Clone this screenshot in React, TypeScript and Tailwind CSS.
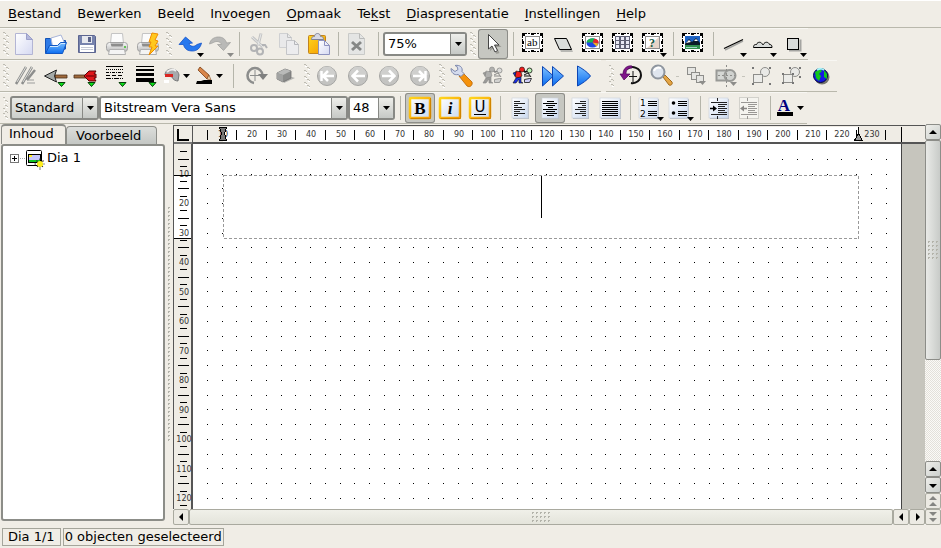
import React, { useLayoutEffect, useRef, useState } from "react";

type IconProps = { children: React.ReactNode; w?: number };

const Art = ({ children, w = 30 }: IconProps) => (
  <svg width={w} height={30} viewBox={`0 0 ${w} 30`} className="block" aria-hidden="true">
    {children}
  </svg>
);

type ToolProps = {
  label: string;
  children: React.ReactNode;
  size?: string;
  w?: number;
  pressed?: boolean;
  disabled?: boolean;
};

const Tool = ({ label, children, size = "w-[30px]", w, pressed, disabled }: ToolProps) => (
  <button
    type="button"
    title={label}
    aria-label={label}
    disabled={disabled}
    className={`${size} h-[30px] shrink-0 rounded-[3px] ${
      pressed ? "bg-[#c6c7c1] shadow-[inset_0_0_0_1px_#8d8d88]" : ""
    }`}
  >
    <Art w={w}>{children}</Art>
  </button>
);

const Sep = ({ size = "w-[10px]" }: { size?: string }) => (
  <div className={`${size} flex h-[30px] shrink-0 items-center justify-center`}>
    <div className="h-6 w-px bg-[#b5b5aa]" />
  </div>
);

const Handle = ({ size = "w-[11px]" }: { size?: string }) => (
  <svg className={`${size} h-[30px] shrink-0`} viewBox="0 0 11 30" shapeRendering="crispEdges" aria-hidden="true">
    {[3, 9, 15, 21].map((y) => (
      <g key={y}>
        <path d={`M3 ${y}h2v1h1v1h-1v-1h-2zM6 ${y + 3}h2v1h1v1h-1v-1h-2z`} fill="#bdbbb2" />
        <path d={`M4 ${y + 2}h2v1h-2zM7 ${y + 5}h2v1h-2z`} fill="#fff" />
      </g>
    ))}
  </svg>
);

const Toolbar = ({ label, children }: { label: string; children: React.ReactNode }) => (
  <div
    role="toolbar"
    aria-label={label}
    className="flex w-fit border-t border-b border-t-[#f8f7f3] border-b-[#b9b8ac]"
  >
    {children}
  </div>
);

const Drop = ({ x = 22, y = 24, fill = "#000" }: { x?: number; y?: number; fill?: string }) => (
  <path d={`M${x} ${y}h7l-3.5 4z`} fill={fill} />
);

const GreenDrop = ({ x = 17 }: { x?: number }) => (
  <path d={`M${x} 21.5h7l-3.5 4z`} fill="#0be01b" stroke="#063b08" strokeWidth="1" />
);

const Printer = () => (
  <>
    <path d="M10.500 4.500h11l1 10h-13z" fill="#fbfbfb" stroke="#c4c4c4" />
    <rect x="5.500" y="13.500" width="21" height="9" rx="3" fill="url(#steel)" stroke="#a3a3a3" />
    <path d="M9.500 14.500h13l-1 3h-11z" fill="#8d8d8d" />
    <path d="M8.500 20.500h15l1 5h-17z" fill="#f4f4f4" stroke="#b0b0b0" />
    <path d="M23 17h2v2h-2z" fill="#62c454" />
  </>
);

const Frame = ({ children }: { children: React.ReactNode }) => (
  <>
    <rect x="4" y="4" width="21" height="19" fill="#fff" />
    <g shapeRendering="crispEdges">
      <path d="M4 4.500h21M4 22.500h21" stroke="#000" strokeDasharray="2 1" />
      <path d="M4.500 4v19M24.500 4v19" stroke="#000" strokeDasharray="2 1" />
      <path d="M4 4h3v3h-3zM22 4h3v3h-3zM4 20h3v3h-3zM22 20h3v3h-3zM13 4h3v2h-3zM13 21h3v2h-3zM4 12h2v3h-2zM23 12h2v3h-2z" />
    </g>
    <rect x="7.500" y="7.500" width="14" height="12" fill="#fff" stroke="#8c8c8c" />
    {children}
  </>
);

const NavRound = ({ d }: { d: string }) => (
  <>
    <circle cx="15" cy="15" r="9.500" fill="#c3c3c1" stroke="#a5a5a3" />
    <path d="M6.500 14a8.500 8.500 0 0 1 17 0z" fill="#cfcfcd" />
    <path d={d} fill="none" stroke="#fff" strokeWidth="2.500" />
  </>
);

const Figures = ({ c }: { c: string[] }) => (
  <>
    <path d="M12 11l4-3 2 3 3-1" stroke={c[4]} strokeWidth="1.500" fill="none" />
    <circle cx="15" cy="8.500" r="2.500" fill={c[0]} stroke={c[4]} strokeWidth=".6" />
    <path d="M9 10l5 1 1 4-3 2-4-1z" fill={c[0]} stroke={c[4]} strokeWidth=".6" />
    <path d="M6 12l3-1-1 4zM9 17l5-1v5l2 1h-4v-4l-3 4H6z" fill={c[1]} stroke={c[4]} strokeWidth=".6" />
    <circle cx="22.500" cy="9.500" r="2.500" fill={c[2]} stroke={c[4]} strokeWidth=".8" />
    <path d="M17 14l4-2 3 4M17 15h6" stroke={c[4]} fill="none" />
    <path d="M17.500 18.500l5-1 2 0-2 4h-5z" fill={c[3]} stroke={c[4]} strokeWidth=".8" />
  </>
);

const Sheet = ({ x = 7, w = 16 }: { x?: number; w?: number }) => (
  <>
    <rect x={x + 1} y="6" width={w} height="20" fill="#b9bfc8" />
    <rect x={x} y="5" width={w} height="20" fill="url(#sheet)" stroke="#c9cfda" strokeWidth=".6" />
  </>
);

const GoldBox = ({ children }: { children: React.ReactNode }) => (
  <>
    <rect x="5" y="5" width="20" height="20" rx="1" fill="url(#sheet)" stroke="url(#gold)" strokeWidth="2.500" />
    <path d="M25.500 5v20.500h-20" fill="none" stroke="#d08400" strokeWidth="1" />
    {children}
  </>
);

const serif = "Liberation Serif, Times New Roman, serif";

const Defs = () => (
  <svg width="0" height="0" className="absolute" aria-hidden="true">
    <defs>
      <linearGradient id="paper" x1="0" y1="0" x2="1" y2="1">
        <stop offset="0" stopColor="#fff" />
        <stop offset="1" stopColor="#d5d9f2" />
      </linearGradient>
      <linearGradient id="sheet" x1="0" y1="0" x2="1" y2="1">
        <stop offset="0" stopColor="#fff" />
        <stop offset="1" stopColor="#cbdaf0" />
      </linearGradient>
      <linearGradient id="steel" x1="0" y1="0" x2="0" y2="1">
        <stop offset="0" stopColor="#fafafa" />
        <stop offset="1" stopColor="#b9b9b9" />
      </linearGradient>
      <linearGradient id="gold" x1="0" y1="0" x2="1" y2="1">
        <stop offset="0" stopColor="#ffd51e" />
        <stop offset="1" stopColor="#f59a00" />
      </linearGradient>
      <linearGradient id="sky" x1="0" y1="0" x2="0" y2="1">
        <stop offset="0" stopColor="#7cc0ff" />
        <stop offset="1" stopColor="#0a6cf0" />
      </linearGradient>
    </defs>
  </svg>
);

type ComboProps = {
  label: string;
  options: string[];
  size: string;
  button?: boolean;
};

const Combo = ({ label, options, size, button }: ComboProps) => (
  <div
    className={`${size} relative flex h-6 shrink-0 overflow-hidden rounded-[3px] border-2 border-[#888985] ${
      button ? "bg-linear-to-b from-[#e9eae6] to-[#cccfcc]" : "bg-white"
    }`}
  >
    <select
      aria-label={label}
      className="h-full w-full appearance-none bg-transparent pl-[3px] text-[13px] leading-5 outline-none"
    >
      {options.map((o) => (
        <option key={o}>{o}</option>
      ))}
    </select>
    <span className="pointer-events-none absolute inset-y-0 right-0 flex w-[15px] items-center justify-center border-l border-[#888985] bg-linear-to-b from-[#eeeeea] to-[#c6c9c6]">
      <svg width="7" height="4" aria-hidden="true">
        <path d="M0 0h7l-3.500 4z" />
      </svg>
    </span>
  </div>
);

const menus = [
  ["", "B", "estand"],
  ["Be", "w", "erken"],
  ["Beel", "d", ""],
  ["In", "v", "oegen"],
  ["", "O", "pmaak"],
  ["Te", "k", "st"],
  ["", "D", "iaspresentatie"],
  ["", "I", "nstellingen"],
  ["", "H", "elp"],
];

const MenuBar = () => (
  <nav className="flex h-7 items-center border-t border-b border-t-white border-b-[#b9b8ac]">
    {menus.map(([a, b, c]) => (
      <button key={a + b + c} type="button" className="px-2 leading-5 whitespace-nowrap">
        {a}
        <span className="underline decoration-1 underline-offset-2">{b}</span>
        {c}
      </button>
    ))}
  </nav>
);

const StandardTools = () => (
  <Toolbar label="Standaard">
    <Handle />
    <Tool label="Nieuw">
      <path d="M4.500 4.500h11l6 6v15h-17z" fill="url(#paper)" stroke="#b3b5d4" />
      <path d="M15.500 4.500v6h6z" fill="#b4b8dc" stroke="#9b9fca" />
    </Tool>
    <Tool label="Openen">
      <path d="M4.500 24V9.500h5l2 2h13V20z" fill="#2f7be6" stroke="#1553b5" />
      <path d="M10 9l10-3 4 9-12 5z" fill="#fff" stroke="#a8b4d8" />
      <path d="M4.500 24.500l4-8h8l3-3h6l-4 11z" fill="url(#sky)" stroke="#1157c4" />
      <path d="M9 17.500h8l3-3h4" stroke="#d4ebff" fill="none" />
    </Tool>
    <Tool label="Opslaan">
      <path d="M7.500 6.500h16l1 1v16h-17z" fill="#7783ad" stroke="#5c6590" />
      <rect x="11" y="7" width="10" height="7" fill="#e6e8ee" />
      <rect x="17" y="8" width="3" height="5" fill="#5a6288" />
      <rect x="9" y="16" width="14" height="7" fill="#fff" />
      <path d="M10 18.500h12M10 20.500h12" stroke="#c5c9d6" />
    </Tool>
    <Tool label="Afdrukken">
      <Printer />
    </Tool>
    <Tool label="Direct afdrukken">
      <g transform="translate(1 0)">
        <Printer />
      </g>
      <path d="M21 4l6 1-3 6 3 1-3 5h3l-9 9 3-8h-3l2-5h-2z" fill="#ffc81e" stroke="#f08c00" />
    </Tool>
    <Handle size="w-[14px]" />
    <Tool label="Ongedaan maken">
      <path
        d="M4 15.500L10.500 8l7 6-3.500.5c1 3 5 4 8 1l4.500-1.500c-1 5-4.500 8-9 8-5 0-8-2-9-6.500z"
        fill="#2778ee"
        stroke="#1553c8"
        strokeWidth=".8"
      />
      <Drop x={22} />
    </Tool>
    <Tool label="Opnieuw" disabled>
      <path
        d="M25.500 13.500l-7 8-6-6h4c-1-3-5-4-8-2l-4 1.500c1-5 5-7 9-7 4 0 7 2 8 6z"
        fill="#b9b9b7"
        stroke="#a2a2a0"
        strokeWidth=".8"
      />
      <Drop x={22} fill="#8b8b88" />
    </Tool>
    <Sep size="w-2" />
    <Tool label="Knippen" disabled>
      <path d="M18 4.500l-3 12M9 8l11 10" stroke="#c3c4c4" strokeWidth="3" />
      <path d="M18 5l-3 11M9 8l11 10" stroke="#e7e8e8" strokeWidth="1" />
      <circle cx="11" cy="19" r="3" fill="none" stroke="#b2b3b5" strokeWidth="2" />
      <circle cx="17" cy="22.500" r="3" fill="none" stroke="#b2b3b5" strokeWidth="2" />
      <path d="M19 16h3l2 3" stroke="#b2b3b5" strokeWidth="2" fill="none" />
    </Tool>
    <Tool label="Kopiëren" disabled>
      <path d="M6.500 4.500h8l4 4v10h-12z" fill="#e9e9ea" stroke="#cfd0d2" />
      <path d="M14.500 4.500v4h4" fill="none" stroke="#bfc0c2" />
      <path d="M13.500 11.500h8l4 4v10h-12z" fill="#ececee" stroke="#c4c5c8" />
      <path d="M21.500 11.500v4h4" fill="none" stroke="#b5b6ba" />
    </Tool>
    <Tool label="Plakken">
      <rect x="5.500" y="6.500" width="17" height="18" rx="1" fill="url(#gold)" stroke="#c08420" />
      <path d="M8.500 10.500c0-3 2-3 3-3 0-4 6-4 6 0 1 0 3 0 3 3z" fill="#d7d9e4" stroke="#7f8398" />
      <path d="M15.500 11.500h6l5 5v9h-11z" fill="url(#paper)" stroke="#8e93bf" />
      <path d="M21.500 11.500v5h5" fill="none" stroke="#8e93bf" />
    </Tool>
    <Sep />
    <Tool label="Verwijderen" disabled>
      <path d="M5.500 4.500h11l5 5v16h-16z" fill="#e4e5e4" stroke="#c9cac8" />
      <path d="M16.500 4.500v5h5" fill="none" stroke="#b9bab9" />
      <path d="M9 13l9 8M18 13l-9 8" stroke="#858786" strokeWidth="3" />
    </Tool>
    <Sep />
    <div className="flex items-center">
      <Combo label="Zoom" options={["75%", "100%", "150%"]} size="w-[84px]" />
    </div>
    <Handle />
    <Tool label="Selecteren" pressed>
      <path d="M12 7v15l3.500-3 3 6 3-1-3-6h5z" fill="#9c9c96" />
      <path d="M10.500 5.500v14.500l3.500-3 3 6 2.500-1.500-3-5.500h4.500z" fill="#fff" stroke="#333" strokeWidth=".9" />
    </Tool>
    <Sep />
    <Tool label="Tekst">
      <Frame>
        <text x="9" y="17" fontSize="11" fontFamily={serif}>
          ab
        </text>
      </Frame>
    </Tool>
    <Tool label="Vorm">
      <path d="M8 11h12l5 12h-12z" fill="#b8b8b4" />
      <path d="M6.500 9.500h12l5 11h-12z" fill="#d9dcda" stroke="#000" />
    </Tool>
    <Tool label="Diagram">
      <Frame>
        <ellipse cx="14.500" cy="14" rx="6" ry="4.500" fill="#1d46e6" />
        <path d="M14.500 13.500l-6 0a6 4.500 0 0 1 8-4z" fill="#17b84e" />
        <path d="M14.500 13.500l2-4a6 4.500 0 0 1 4 5z" fill="#e4252b" />
        <path d="M14.500 13.500l6 1-2 3z" fill="#f6b21b" />
      </Frame>
    </Tool>
    <Tool label="Tabel">
      <Frame>
        <rect x="7" y="7" width="15" height="13" fill="#5e6074" />
        <path
          d="M8 8h3v3h-3zM13 8h3v3h-3zM18 8h3v3h-3zM8 12h3v3h-3zM13 12h3v3h-3zM18 12h3v3h-3zM8 16h3v3h-3zM13 16h3v3h-3zM18 16h3v3h-3z"
          fill="#e9eaf6"
        />
      </Frame>
    </Tool>
    <Tool label="Object">
      <Frame>
        <path d="M21 8v11h-12z" fill="#e6d4c8" />
        <text x="11" y="18" fontSize="12" fontWeight="bold" fontFamily={serif} fill="#14573f">
          ?
        </text>
      </Frame>
      <Drop />
    </Tool>
    <Sep />
    <Tool label="Afbeelding">
      <Frame>
        <rect x="7" y="7" width="15" height="7" fill="#1d63c4" />
        <path d="M7 15l4-5 3 3 4-4 4 5v3H7z" fill="#0b1b2a" />
        <path d="M8 14l3-3 2 2zM16 12l2-2 2 2z" fill="#fff" />
        <rect x="7" y="16" width="15" height="4" fill="#2f8f4e" />
        <rect x="8" y="18" width="11" height="1" fill="#9fd6c6" />
      </Frame>
    </Tool>
    <Sep />
    <Tool label="Lijn">
      <path d="M7 21l18-9" stroke="#a5a5a2" strokeWidth="1.500" />
      <path d="M6 19.500l19-9" stroke="#000" strokeWidth="1.200" />
      <Drop />
    </Tool>
    <Tool label="Gesloten lijn">
      <path
        d="M5.500 18.500c0-3 1.500-3 3-3 1-3 5-3 6 0h1c1-3 5-3 6 0 2 0 2.500 1 2.500 3z"
        fill="#d9dcda"
        stroke="#000"
      />
      <Drop />
    </Tool>
    <Tool label="Rechthoek">
      <path d="M11 21.500h11.500v-11" stroke="#a5a5a2" fill="none" strokeWidth="2" />
      <rect x="9.500" y="9.500" width="11" height="11" fill="#d9dcda" stroke="#000" />
      <Drop />
    </Tool>
  </Toolbar>
);

const FormatTools = () => (
  <div className="flex gap-[5px]">
    <Toolbar label="Opmaak">
      <Handle />
      <Tool label="Pen en vulling" disabled>
        <path d="M15 6l-10 17M21 6l-10 17M24 9l-8 10" stroke="#8d8e8d" strokeWidth="2.500" />
        <path d="M15 6l-9 15M21 6l-9 15" stroke="#dededb" strokeWidth="1" />
        <path d="M16 19h7M16 22h8" stroke="#9c9d9c" />
      </Tool>
      <Tool label="Lijnbegin">
        <path d="M14 14h12v3h-12z" fill="#a06a3c" stroke="#4a2f18" strokeWidth=".8" />
        <path d="M3.500 15l12-6-2 6 2 6z" fill="#a5aaa8" stroke="#222" />
        <GreenDrop />
      </Tool>
      <Tool label="Lijneinde">
        <path d="M3 14h15v3h-15z" fill="#a06a3c" stroke="#4a2f18" strokeWidth=".8" />
        <path d="M13 15l5-5h7l-2 3h2v4h-2l2 3h-7z" fill="#e0151a" stroke="#5a0305" />
        <path d="M15 15h9" stroke="#5a0305" />
        <GreenDrop />
      </Tool>
      <Tool label="Lijnstijl">
        <g shapeRendering="crispEdges">
          <path d="M5 5.500h17" stroke="#000" />
          <path d="M5 8.500h17" stroke="#000" strokeDasharray="1 1" />
          <path d="M5 11.500h17" stroke="#000" strokeDasharray="3 1 1 1" />
          <path d="M5 14.500h17" stroke="#000" strokeDasharray="4 2" />
          <path d="M5 17.500h17" stroke="#000" strokeDasharray="5 1 1 1" />
        </g>
        <GreenDrop x={18} />
      </Tool>
      <Tool label="Lijndikte">
        <path d="M5 5h18v1h-18zM5 8h18v2h-18zM5 12h18v3h-18zM5 17h18v4h-18z" />
        <GreenDrop x={18} />
      </Tool>
      <Tool label="Vulkleur" size="w-8" w={32}>
        <path d="M3 19h5v3h-5z" fill="#fff" />
        <path d="M4 14c0-8 13-8 14 0l-1 6c-2 0-5-1-6-4z" fill="#a7a9ab" stroke="#626466" strokeWidth=".8" />
        <path d="M6 11c3-3 7-3 9-1" stroke="#eee" fill="none" strokeWidth="2" />
        <path d="M4 14.500h8" stroke="#d92622" strokeWidth="3" />
        <Drop y={13} />
      </Tool>
      <Tool label="Lijnkleur" size="w-8" w={32}>
        <path d="M7 6l9 8-2 4-9-9z" fill="#d9864a" stroke="#7a3d12" strokeWidth=".8" />
        <path d="M14 18l2-4 2 5z" fill="#f1d3a8" stroke="#7a3d12" strokeWidth=".6" />
        <path d="M4 20h4l3-1h8v4H3z" />
        <Drop x={23} y={13} />
      </Tool>
      <Sep size="w-4" />
      <Tool label="Roteren" disabled>
        <path d="M13 22a7.500 7.500 0 1 1 8.500-8" fill="none" stroke="#8c8d8c" strokeWidth="2.500" />
        <path d="M17 13h10l-5 6z" fill="#7f807f" />
        <path d="M9 14.500h10M14 9v11" stroke="#8c8d8c" />
      </Tool>
      <Tool label="Schaduw" disabled>
        <path d="M13 22l11-5-3-1-8 3z" fill="#b5b5b2" />
        <path d="M6 12l8-4 6 2v7l-8 4-6-3z" fill="#8b8c8b" stroke="#6e6f6e" strokeWidth=".8" />
        <path d="M6 12l6 2 8-4-6-2z" fill="#b9bab9" />
        <path d="M12 14v7l-6-3v-6z" fill="#a2a3a2" />
      </Tool>
      <Handle />
      <Tool label="Eerste dia" size="w-[31px]" disabled>
        <NavRound d="M22 15h-10M16 10l-5 5 5 5M9.500 10v10" />
      </Tool>
      <Tool label="Vorige dia" size="w-[31px]" disabled>
        <NavRound d="M22 15h-12M15 9.500l-5.500 5.500 5.500 5.500" />
      </Tool>
      <Tool label="Volgende dia" size="w-[31px]" disabled>
        <NavRound d="M8 15h12M15 9.500l5.500 5.500-5.500 5.500" />
      </Tool>
      <Tool label="Laatste dia" size="w-[31px]" disabled>
        <NavRound d="M8 15h10M14 10l5 5-5 5M20.500 10v10" />
      </Tool>
      <Handle />
      <Tool label="Presentatie instellen">
        <path d="M12 15l4-3 9 9c1 3-2 6-5 4z" fill="#f5920c" stroke="#b96200" strokeWidth=".8" />
        <path
          d="M8 4.500c5-1 8 2 7 6l2 2-3 3-3-2c-4 1-7-2-7-6l4 3 3-2-1-3z"
          fill="#d4dbee"
          stroke="#7e89ad"
        />
      </Tool>
      <Tool label="Objecteffect" disabled>
        <Figures c={["#b0b0ae", "#9a9a98", "#dcdcda", "#d2d2d0", "#888887"]} />
      </Tool>
      <Tool label="Diaovergang">
        <Figures c={["#f01c1c", "#1a2fe8", "#b9f3b4", "#cfcdf6", "#101010"]} />
      </Tool>
      <Tool label="Presentatie starten">
        <path d="M5.500 5.500l11 9.500-11 10z" fill="url(#sky)" stroke="#0c45b4" />
        <path d="M15.500 5.500l11 9.500-11 10z" fill="url(#sky)" stroke="#0c45b4" />
      </Tool>
      <Tool label="Deze dia tonen" size="w-[34px]" w={34}>
        <path d="M10.500 5c4 2 10 6 13 10-3 4-9 8-13 10z" fill="url(#sky)" stroke="#0c45b4" />
      </Tool>
    </Toolbar>
    <Toolbar label="Extra">
      <Handle size="w-[10px]" />
      <Tool label="Draaien">
        <path d="M11 8c5-4 14-1 14 6 0 5-5 9-10 8" fill="none" stroke="#111" strokeWidth="2" />
        <path d="M16 7c-4 0-6 2-6 6h4l-6 6-4-6h3c0-6 5-9 9-8z" fill="#7e1489" stroke="#4b0755" strokeWidth=".7" />
        <path d="M13 15.500h8M17 10v11" stroke="#111" />
      </Tool>
      <Tool label="Zoomen">
        <path d="M17 16l2-2 7 7c1 2-1 4-3 3z" fill="#e4a545" stroke="#a0691c" />
        <circle cx="12" cy="11" r="6.500" fill="#dfe5ee" stroke="#8e959e" strokeWidth="2" />
        <path d="M8 10c1-3 4-4 7-3" stroke="#fff" strokeWidth="2" fill="none" />
      </Tool>
      <div className="flex w-[6px] items-center">
        <div className="h-px w-[3px] bg-[#c5c4bb]" />
      </div>
      <Tool label="Volgorde" disabled>
        <rect x="5.500" y="6.500" width="8" height="7" fill="#e5e5e2" stroke="#8d8d8a" />
        <rect x="9.500" y="11.500" width="8" height="7" fill="#e5e5e2" stroke="#8d8d8a" />
        <rect x="14.500" y="14.500" width="7" height="7" fill="#e5e5e2" stroke="#8d8d8a" />
        <Drop x={17} y={20} fill="#8d8d8a" />
      </Tool>
      <Tool label="Uitlijnen" disabled>
        <rect x="4.500" y="9.500" width="12" height="10" fill="#d5d7d4" stroke="#989996" strokeWidth="2" />
        <circle cx="18" cy="14.500" r="5.500" fill="#d0d2cf" stroke="#989996" strokeWidth="2" />
        <path d="M14.500 4v22M6 14.500h17" stroke="#8d8d8a" strokeDasharray="2 2" />
        <Drop x={18} y={21} fill="#8d8d8a" />
      </Tool>
      <div className="flex w-[5px] items-center">
        <div className="h-px w-[3px] bg-[#c5c4bb]" />
      </div>
      <Tool label="Groeperen" disabled>
        <circle cx="18" cy="11" r="4.500" fill="#e9e9e6" stroke="#8d8d8a" />
        <rect x="6.500" y="13.500" width="9" height="8" fill="#ecece9" stroke="#8d8d8a" />
        <path d="M5 6h2v2h-2zM22 6h2v2h-2zM5 22h2v2h-2zM22 22h2v2h-2z" fill="#777" />
      </Tool>
      <Tool label="Groep opheffen" disabled>
        <circle cx="18" cy="11" r="4.500" fill="#e9e9e6" stroke="#8d8d8a" />
        <rect x="6.500" y="13.500" width="9" height="8" fill="#ecece9" stroke="#8d8d8a" />
        <path
          d="M12 6h2v2h-2zM22 6h2v2h-2zM5 12h2v2h-2zM15 12h2v2h-2zM5 21h2v2h-2zM15 21h2v2h-2zM22 15h2v2h-2z"
          fill="#777"
        />
      </Tool>
      <Tool label="Koppeling invoegen">
        <circle cx="15" cy="16" r="7.500" fill="#77776f" />
        <circle cx="13.500" cy="14.500" r="7" fill="#1618e2" stroke="#04043c" />
        <path d="M8 11l5-3 2 2-3 3 2 2-2 5-3-3zM17 9l3 4v5l-3-2z" fill="#12c51c" />
        <path d="M10 9c3-2 6-1 7 0" stroke="#a8f5f8" strokeWidth="2" fill="none" />
      </Tool>
    </Toolbar>
  </div>
);

const lines = (xs: number[][]) => xs.map(([x1, x2, y]) => `M${x1} ${y}.5H${x2}`).join("");

const TextTools = () => (
  <Toolbar label="Tekst">
    <Handle size="w-[10px]" />
    <div className="flex items-center">
      <Combo label="Stijl" options={["Standard"]} size="w-[89px]" button />
      <Combo label="Lettertype" options={["Bitstream Vera Sans"]} size="w-[249px]" />
      <Combo label="Grootte" options={["48", "60", "72"]} size="w-[47px]" />
    </div>
    <Sep />
    <Tool label="Vet" pressed>
      <GoldBox>
        <text x="15" y="20.500" textAnchor="middle" fontSize="17" fontWeight="bold" fontFamily={serif}>
          B
        </text>
      </GoldBox>
    </Tool>
    <Tool label="Cursief">
      <GoldBox>
        <text
          x="15"
          y="20.500"
          textAnchor="middle"
          fontSize="17"
          fontWeight="bold"
          fontStyle="italic"
          fontFamily={serif}
        >
          i
        </text>
      </GoldBox>
    </Tool>
    <Tool label="Onderstrepen">
      <GoldBox>
        <text x="15" y="19" textAnchor="middle" fontSize="15" fontFamily="DejaVu Sans, sans-serif">
          U
        </text>
        <path d="M9 21.500h12" stroke="#000" />
      </GoldBox>
    </Tool>
    <Sep />
    <Tool label="Links uitlijnen">
      <Sheet />
      <path d={lines([[9, 15, 8], [9, 20, 10], [9, 13, 12], [9, 17, 14], [9, 20, 16], [9, 15, 18], [9, 20, 20], [9, 13, 22]])} stroke="#222" />
    </Tool>
    <Tool label="Centreren" pressed>
      <Sheet />
      <path d={lines([[12, 19, 8], [8, 22, 10], [11, 20, 12], [13, 18, 14], [8, 22, 16], [11, 20, 18], [8, 22, 20], [12, 19, 22]])} stroke="#000" />
    </Tool>
    <Tool label="Rechts uitlijnen">
      <Sheet />
      <path d={lines([[15, 21, 8], [10, 21, 10], [17, 21, 12], [13, 21, 14], [10, 21, 16], [15, 21, 18], [10, 21, 20], [17, 21, 22]])} stroke="#222" />
    </Tool>
    <Tool label="Uitvullen">
      <Sheet x={5} w={20} />
      <path d={lines([8, 10, 12, 14, 16, 18, 20, 22].map((y) => [7, 23, y]))} stroke="#000" />
    </Tool>
    <Sep />
    <Tool label="Genummerde lijst">
      <Sheet x={4} w={19} />
      <text x="5" y="13" fontSize="9" fontFamily="DejaVu Sans, sans-serif">
        1
      </text>
      <text x="5" y="23.500" fontSize="9" fontFamily="DejaVu Sans, sans-serif">
        2
      </text>
      <path d={lines([[13, 22, 8], [13, 22, 10], [13, 22, 12], [13, 22, 18], [13, 22, 20], [13, 22, 22]])} stroke="#000" />
      <Drop />
    </Tool>
    <Tool label="Opsomming">
      <Sheet x={4} w={19} />
      <circle cx="8.500" cy="10" r="1.800" />
      <circle cx="8.500" cy="20" r="1.800" />
      <path d={lines([[13, 22, 8], [13, 22, 10], [13, 22, 12], [13, 22, 18], [13, 22, 20], [13, 22, 22]])} stroke="#000" />
      <Drop />
    </Tool>
    <Sep />
    <Tool label="Inspringen">
      <Sheet x={4} w={19} />
      <path d={lines([[6, 22, 9], [13, 22, 11], [13, 20, 13], [13, 22, 15], [13, 20, 17], [13, 22, 19], [6, 22, 21]])} stroke="#222" />
      <path d="M12.500 5v3M12.500 23v3" stroke="#222" />
      <path d="M5 15.500h4" stroke="#000" strokeWidth="1.500" />
      <path d="M8 12.500l4 3-4 3z" />
    </Tool>
    <Tool label="Terugspringen" disabled>
      <g opacity=".5">
        <rect x="4.500" y="4.500" width="19" height="21" fill="#fafbf8" stroke="#b5b6b2" />
        <path d={lines([[6, 22, 9], [13, 22, 11], [13, 20, 13], [13, 22, 15], [13, 20, 17], [13, 22, 19], [6, 22, 21]])} stroke="#444" />
        <path d="M12.500 5v3M12.500 23v3" stroke="#444" />
        <path d="M8 15.500h4" stroke="#222" strokeWidth="1.500" />
        <path d="M9 12.500l-4 3 4 3z" fill="#222" />
      </g>
    </Tool>
    <Sep />
    <Tool label="Tekstkleur" size="w-8" w={32}>
      <text x="9" y="18" textAnchor="middle" fontSize="17" fontWeight="bold" fontFamily={serif} fill="#000080">
        A
      </text>
      <path d="M2 19h16v4h-16z" />
      <Drop y={13} />
    </Tool>
  </Toolbar>
);

const SidePanel = () => {
  const [tab, setTab] = useState(0);
  const tabs = [
    { name: "Inhoud", size: "w-[65px] pl-[7px]" },
    { name: "Voorbeeld", size: "w-[91px] pl-[9px]" },
  ];
  return (
    <aside className="flex w-[166px] shrink-0 flex-col pb-1">
      <div className="flex h-5 items-end pl-px" role="tablist">
        {tabs.map((t, i) => (
          <button
            key={t.name}
            type="button"
            role="tab"
            aria-selected={tab === i}
            onClick={() => setTab(i)}
            className={`rounded-t-[4px] border border-b-0 border-[#8c8d88] text-left leading-4 ${t.size} ${
              tab === i ? "h-5 border-t-2 pb-1" : "h-[18px] bg-linear-to-b from-[#dcdedb] to-[#c4c7c4]"
            }`}
          >
            {t.name}
          </button>
        ))}
      </div>
      <div className="mx-px flex-1 rounded-[3px] border-2 border-[#8c8d88] bg-white" role="tree">
        <div className="flex h-6 items-center pl-[7px]" role="treeitem">
          <button type="button" aria-label="Uitvouwen" className="h-[9px] w-[9px] bg-white">
            <svg width="9" height="9" className="block" shapeRendering="crispEdges">
              <path d="M.5.5h8v8h-8z" fill="none" stroke="#777" />
              <path d="M2 4h5v1h-5zM4 2h1v5h-1z" />
            </svg>
          </button>
          <span className="w-[7px] px-px">
            <span className="block border-t border-dotted border-[#aaa]" />
          </span>
          <svg width="19" height="20" viewBox="0 0 19 20" className="mt-1 mr-[2px]" aria-hidden="true">
            <rect x=".5" y=".5" width="15" height="15" rx="1" fill="#fff" stroke="#000" />
            <rect x="2.500" y="4.500" width="12" height="8" fill="#c5c6fb" stroke="#000" />
            <path d="M3 10h11v2h-11z" fill="#11c424" />
            <path d="M3 5h3v2h-3z" fill="#ffef1e" />
            <path
              d="M14 8.500v11M8.500 14h11M10.500 10.500l7 7M17.500 10.500l-7 7"
              stroke="#222"
              strokeWidth="1.200"
              strokeDasharray="1.500 1"
            />
            <circle cx="14" cy="14" r="3" fill="#ffef1e" />
          </svg>
          Dia 1
        </div>
      </div>
    </aside>
  );
};

const step = 29.5;
const hMarks = Array.from({ length: 24 }, (_, i) => i);
const at = (v: number) => Math.floor(v);

const HRuler = () => (
  <div className="h-[19px] min-w-0 flex-1 overflow-hidden border-t border-l border-[#555] bg-[#efece5]">
    <svg width="1200" height="18" className="block" shapeRendering="crispEdges">
      <path d="M30 1h636v15h-636z" fill="#fff" />
      <path d="M0 16h1200v2H0z" fill="#555" />
      {hMarks.map((i) => (
        <path key={i} d={`M${at(14.3 + i * step)} 4h1v10h-1z`} />
      ))}
      {hMarks.slice(1).map((i) => (
        <text key={i} x={at(0.5 + i * step)} y="11" textAnchor="middle" fontSize="8" fill="#333">
          {i * 10}
        </text>
      ))}
      <path d="M26.500 1.500h7l-2 6 2 7h-7l2-7z" fill="#777" stroke="#000" />
      <path d="M665 1h1v9h-1zM708 1h1v15h-1z" />
      <path d="M665.500 7.500l4 7h-8z" fill="#999" stroke="#000" />
    </svg>
  </div>
);

const VRuler = () => {
  const box = useRef<HTMLDivElement>(null);
  const [marks, setMarks] = useState(12);

  useLayoutEffect(() => {
    const el = box.current;
    if (!el) return;
    // only whole labels that fit in the visible part
    const fit = () => setMarks(Math.max(0, Math.floor((el.clientHeight - 35) / step) + 1));
    fit();
    const ro = new ResizeObserver(fit);
    ro.observe(el);
    return () => ro.disconnect();
  }, []);

  return (
    <div ref={box} className="flex w-5 shrink-0 overflow-hidden border-l border-[#555] bg-[#efece5]">
      <svg width="19" height="100%" className="block" shapeRendering="crispEdges">
        <path d="M0 31h17v63H0z" fill="#fff" />
        <path d="M17 0h2v2000h-2z" fill="#555" />
        {Array.from({ length: marks + 1 }, (_, i) => {
          const y = 15.3 + i * step;
          return (
            <g key={i}>
              <path d={`M4 ${at(y)}h11v1h-11zM6 ${at(y - 7.4)}h7v1h-7zM6 ${at(y + 7.4)}h7v1h-7z`} />
              {i < marks && (
                <text x="10" y={at(y + 18)} textAnchor="middle" fontSize="8" fill="#333">
                  {(i + 1) * 10}
                </text>
              )}
            </g>
          );
        })}
        <path d="M0 31h17v1H0zM0 94h17v1H0z" />
      </svg>
    </div>
  );
};

const Grid = () => {
  const dots: string[] = [];
  for (let r = 0; r < 60; r++) {
    for (let c = 0; c < 47; c++) {
      dots.push(`M${at(14.3 + c * 14.76)} ${at(15.3 + r * 14.74)}h1v1h-1z`);
    }
  }
  return (
    <svg width="708" height="900" className="block" shapeRendering="crispEdges" aria-hidden="true">
      <path d={dots.join("")} />
    </svg>
  );
};

const Canvas = () => (
  <div className="flex min-h-0 min-w-0 flex-1 overflow-hidden bg-[#c6c5bd]">
    <div className="relative w-[709px] shrink-0 overflow-hidden border-r border-[#444] bg-white">
      <Grid />
      {/* title placeholder with text caret */}
      <svg className="absolute top-[31px] left-[30px]" width="636" height="64" shapeRendering="crispEdges">
        <rect x=".5" y=".5" width="635" height="63" fill="#fff" stroke="#999" strokeDasharray="3 2" />
        <path d="M318 1h1v42h-1z" />
      </svg>
    </div>
  </div>
);

type ScrollProps = { label: string; d: string; dim?: boolean; flat?: boolean };

const ScrollButton = ({ label, d, dim, flat }: ScrollProps) => (
  <button
    type="button"
    aria-label={label}
    className={`h-4 w-4 shrink-0 rounded-[2px] border ${
      flat ? "border-[#a9a99f] bg-[#eceae3]" : "border-[#8c8d88] bg-linear-to-br from-[#eeeeea] to-[#ccd0cd]"
    }`}
  >
    <svg width="14" height="14" className="block" aria-hidden="true">
      <path d={d} fill={dim ? "#858582" : "#000"} />
    </svg>
  </button>
);

const Grip = ({ w, h }: { w: number; h: number }) => {
  const cells: string[] = [];
  for (let y = 0; y < h; y += 4) for (let x = 0; x < w; x += 4) cells.push(`M${x} ${y}h2v1h-1v1h-1z`);
  return (
    <svg width={w} height={h} shapeRendering="crispEdges" aria-hidden="true">
      <path d={cells.join("")} fill="#b3b3aa" />
    </svg>
  );
};

const trough = "bg-[repeating-conic-gradient(#e3e1da_0_25%,#fbfaf7_0_50%)] bg-[length:2px_2px]";

const Editor = () => (
  <section className="flex min-w-0 flex-1">
    <div className="flex min-w-0 flex-1 flex-col">
      <div className="flex h-5 shrink-0 pt-px">
        <div className="h-[19px] w-[19px] shrink-0 border-t border-l border-[#555] bg-[#efece5]">
          <svg width="18" height="18" className="block" shapeRendering="crispEdges">
            <path d="M3 3h2v10h10v2H3z" />
            <path d="M0 16h18v2H0z" fill="#777" />
          </svg>
        </div>
        <HRuler />
      </div>
      <div className="flex min-h-0 flex-1">
        <VRuler />
        <Canvas />
      </div>
      <div className={`flex h-4 shrink-0 ${trough}`}>
        <ScrollButton label="Naar links" d="M9 3v8l-4-4z" flat />
        <div className="flex flex-1 items-center justify-center rounded-[2px] border border-[#a9a99f] bg-linear-to-b from-[#f0f0e9] to-[#e4e4db]">
          <Grip w={18} h={10} />
        </div>
        <ScrollButton label="Naar links" d="M9 3v8l-4-4z" flat />
        <ScrollButton label="Naar rechts" d="M6 3v8l4-4z" flat />
      </div>
    </div>
    <div className={`flex w-4 shrink-0 flex-col ${trough}`}>
      <ScrollButton label="Omhoog" d="M3 9h8l-4-4z" />
      <div className="flex h-[220px] items-center justify-center rounded-[2px] border border-[#8c8d88] bg-linear-to-r from-[#e9eae7] to-[#c8cbc8]">
        <Grip w={10} h={18} />
      </div>
      <div className="flex-1" />
      <ScrollButton label="Omhoog" d="M3 9h8l-4-4z" />
      <ScrollButton label="Omlaag" d="M3 6h8l-4 4z" />
      <ScrollButton label="Vorige dia" d="M3 6h8l-4-4zM3 12h8l-4-4z" dim flat />
      <ScrollButton label="Volgende dia" d="M3 2h8l-4 4zM3 8h8l-4 4z" dim flat />
    </div>
  </section>
);

export default function App() {
  return (
    <div className="flex h-screen flex-col overflow-hidden bg-[#f0ede6] font-['DejaVu_Sans',sans-serif] text-[13px] text-black">
      <Defs />
      <MenuBar />
      <StandardTools />
      <FormatTools />
      <TextTools />
      <main className="flex min-h-0 flex-1">
        <SidePanel />
        <div className="flex w-[7px] shrink-0 cursor-col-resize items-center justify-center">
          <Grip w={3} h={236} />
        </div>
        <Editor />
      </main>
      <footer className="flex h-[23px] shrink-0 gap-[2px] px-[2px] pt-[3px] pb-[2px] leading-4">
        <span className="border border-[#a5a59b] px-[5px]">Dia 1/1</span>
        <span className="border border-[#a5a59b] px-px">0 objecten geselecteerd</span>
      </footer>
    </div>
  );
}
